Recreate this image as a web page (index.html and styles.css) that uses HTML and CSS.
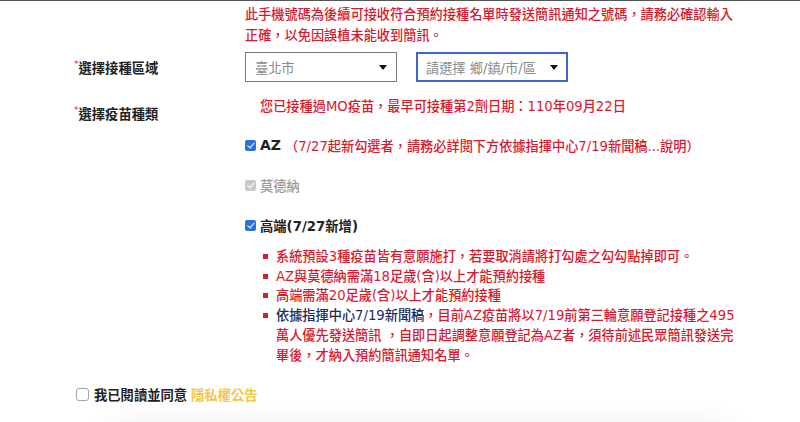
FILE: index.html
```html
<!DOCTYPE html>
<html lang="zh-Hant">
<head>
<meta charset="utf-8">
<title>預約接種</title>
<link rel="stylesheet" href="styles.css">
</head>
<body>
<div class="topline"></div>
<form class="form">
  <div class="row row-note">
    <div class="label"></div>
    <div class="field">
      <p class="note">此手機號碼為後續可接收符合預約接種名單時發送簡訊通知之號碼，請務必確認輸入正確，以免因誤植未能收到簡訊。</p>
    </div>
  </div>

  <div class="row row-area">
    <div class="label"><span class="req">*</span>選擇接種區域</div>
    <div class="field selects">
      <div class="select"><span class="sel-text">臺北市</span><span class="caret"></span></div>
      <div class="select focused"><span class="sel-text">請選擇 鄉/鎮/市/區</span><span class="caret"></span></div>
    </div>
  </div>

  <div class="row row-vaccine">
    <div class="label vlabel"><span class="req">*</span>選擇疫苗種類</div>
    <div class="field">
      <p class="notice">您已接種過MO疫苗，最早可接種第2劑日期：110年09月22日</p>
      <div class="opt">
        <span class="cb checked"></span>
        <span class="opt-name bold">AZ</span>
        <span class="opt-hint">（7/27起新勾選者，請務必詳閱下方依據指揮中心7/19新聞稿...說明）</span>
      </div>
      <div class="opt disabled">
        <span class="cb checked dis"></span>
        <span class="opt-name">莫德納</span>
      </div>
      <div class="opt">
        <span class="cb checked"></span>
        <span class="opt-name medium">高端(7/27新增)</span>
      </div>
      <ul class="rules">
        <li>系統預設3種疫苗皆有意願施打，若要取消請將打勾處之勾勾點掉即可。</li>
        <li>AZ與莫德納需滿18足歲(含)以上才能預約接種</li>
        <li>高端需滿20足歲(含)以上才能預約接種</li>
        <li><span class="navy">依據指揮中心7/19新聞稿</span>，目前AZ疫苗將以7/19前第三輪意願登記接種之495萬人優先發送簡訊 ，自即日起調整意願登記為AZ者，須待前述民眾簡訊發送完畢後，才納入預約簡訊通知名單。</li>
      </ul>
    </div>
  </div>

  <div class="agree">
    <span class="cb empty"></span>
    <span class="agree-text">我已閱讀並同意</span>
    <span class="privacy">隱私權公告</span>
  </div>
  <div class="card-edge"></div>
</form>
</body>
</html>
```

FILE: styles.css
```css
html, body {
  margin: 0;
  padding: 0;
  background: #fff;
  overflow: hidden;
  height: 422px;
}
body {
  font-family: "DejaVu Sans", "Noto Sans CJK TC", sans-serif;
  font-size: 13px;
  font-weight: 500;
  color: #222;
}
.topline {
  height: 1px;
  background: #555;
}
.form {
  display: block;
}
.row {
  display: grid;
  grid-template-columns: 245px 1fr;
}
.label {
  padding-left: 77px;
  font-weight: 700;
  color: #222;
  position: relative;
  font-size: 13.3px;
}
.req {
  color: #d9263a;
  font-size: 9px;
  position: relative;
  top: -6px;
  margin-left: -3px;
  margin-right: 0;
  font-weight: 400;
}
.note {
  margin: 3px 0 0;
  width: 492px;
  color: #d8192e;
  line-height: 21px;
  font-size: 13.2px;
}
.row-area {
  margin-top: 6px;
  align-items: center;
}
.row-area .label {
  padding-top: 1px;
}
.selects {
  display: flex;
  gap: 19px;
}
.select {
  box-sizing: border-box;
  width: 152px;
  height: 30px;
  border: 1px solid #7a7a7a;
  display: flex;
  align-items: center;
  justify-content: space-between;
  padding: 0 9px 0 9px;
  color: #8a8a8a;
  background: #fff;
}
.select.focused {
  border: 2px solid #3f67c9;
  padding: 0 8px 0 8px;
}
.sel-text {
  font-size: 13.2px;
  font-weight: 400;
}
.caret {
  width: 0;
  height: 0;
  border-left: 4.5px solid transparent;
  border-right: 4.5px solid transparent;
  border-top: 5px solid #111;
}
.row-vaccine {
  margin-top: 15px;
}
.vlabel {
  padding-top: 7px;
}
.notice {
  margin: 0 0 0 15px;
  color: #d8192e;
  line-height: 19px;
  font-size: 13.2px;
}
.opt {
  display: flex;
  align-items: center;
  height: 20px;
  margin-top: 19px;
}
.opt + .opt {
  margin-top: 20px;
}
.cb {
  display: inline-block;
  box-sizing: border-box;
  width: 11px;
  height: 11px;
  border-radius: 2px;
  margin-right: 4px;
  position: relative;
  flex: none;
}
.cb.checked {
  background: #2d6fdb;
}
.cb.checked::after {
  content: "";
  position: absolute;
  left: 3.5px;
  top: 1px;
  width: 3px;
  height: 6px;
  border: solid #fff;
  border-width: 0 1.6px 1.6px 0;
  transform: rotate(40deg);
}
.cb.dis {
  background: #c9c9c9;
}
.opt-name {
  font-size: 13.3px;
  color: #222;
}
.opt-name.bold {
  font-weight: 700;
  font-size: 14px;
  margin-right: 4px;
}
.opt-name.medium {
  font-weight: 700;
}
.opt.disabled .opt-name {
  color: #9a9a9a;
}
.opt-hint {
  color: #d8192e;
  font-size: 13.2px;
}
.rules {
  list-style: none;
  margin: 12px 0 0 18px;
  padding: 0 0 0 13px;
  width: 462px;
  color: #d8192e;
  line-height: 19.7px;
  font-size: 13.2px;
}
.rules li {
  position: relative;
}
.rules li::before {
  content: "";
  position: absolute;
  left: -13px;
  top: 7px;
  width: 5px;
  height: 5px;
  background: #d8192e;
}
.navy {
  color: #1c2b5a;
}
.agree {
  display: flex;
  align-items: center;
  margin: 19px 0 0 76px;
  height: 20px;
}
.cb.empty {
  width: 13px;
  height: 13px;
  border: 1px solid #a5a5a5;
  border-radius: 3px;
  background: #fff;
  margin-right: 5px;
}
.agree-text {
  font-weight: 700;
  color: #222;
  font-size: 13.3px;
  margin-right: 4px;
}
.privacy {
  color: #f3c64a;
  font-weight: 700;
  font-size: 13.3px;
}
.card-edge {
  margin: 22px 0 0 110px;
  width: 620px;
  height: 40px;
  background: #fff;
  box-shadow: 0 0 28px rgba(0, 0, 0, 0.09);
  border-radius: 4px;
}
```
